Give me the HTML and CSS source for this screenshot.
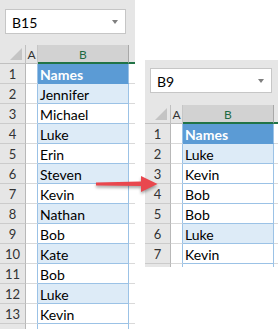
FILE: index.html
```html
<!DOCTYPE html>
<html lang="en">
<head>
    <meta charset="UTF-8">
    <title>Remove duplicates</title>
    <link rel="stylesheet" href="styles.css">
</head>
<body>
    <div class="canvas">
        <section class="sheet sheet-left">
            <div class="namebox"><span>B15</span><i class="caret"></i></div>
            <div class="grid">
                <div class="corner"></div><div class="colhead">A</div><div class="colhead sel">B</div><div class="colhead rest"></div>
                <div class="rh">1</div><div class="ca"></div><div class="cb head">Names</div><div class="cr"></div>
                <div class="rh">2</div><div class="ca"></div><div class="cb band">Jennifer</div><div class="cr"></div>
                <div class="rh">3</div><div class="ca"></div><div class="cb">Michael</div><div class="cr"></div>
                <div class="rh">4</div><div class="ca"></div><div class="cb band">Luke</div><div class="cr"></div>
                <div class="rh">5</div><div class="ca"></div><div class="cb">Erin</div><div class="cr"></div>
                <div class="rh">6</div><div class="ca"></div><div class="cb band">Steven</div><div class="cr"></div>
                <div class="rh">7</div><div class="ca"></div><div class="cb">Kevin</div><div class="cr"></div>
                <div class="rh">8</div><div class="ca"></div><div class="cb band">Nathan</div><div class="cr"></div>
                <div class="rh">9</div><div class="ca"></div><div class="cb">Bob</div><div class="cr"></div>
                <div class="rh">10</div><div class="ca"></div><div class="cb band">Kate</div><div class="cr"></div>
                <div class="rh">11</div><div class="ca"></div><div class="cb">Bob</div><div class="cr"></div>
                <div class="rh">12</div><div class="ca"></div><div class="cb band">Luke</div><div class="cr"></div>
                <div class="rh">13</div><div class="ca"></div><div class="cb">Kevin</div><div class="cr"></div>
                <div class="rh"></div><div class="ca"></div><div class="cb"></div><div class="cr"></div>
            </div>
        </section>

        <section class="sheet sheet-right">
            <div class="namebox"><span>B9</span><i class="caret"></i></div>
            <div class="grid">
                <div class="corner"></div><div class="colhead">A</div><div class="colhead sel">B</div><div class="colhead rest"></div>
                <div class="rh">1</div><div class="ca"></div><div class="cb head">Names</div><div class="cr"></div>
                <div class="rh">2</div><div class="ca"></div><div class="cb band">Luke</div><div class="cr"></div>
                <div class="rh">3</div><div class="ca"></div><div class="cb">Kevin</div><div class="cr"></div>
                <div class="rh">4</div><div class="ca"></div><div class="cb">Bob</div><div class="cr"></div>
                <div class="rh">5</div><div class="ca"></div><div class="cb">Bob</div><div class="cr"></div>
                <div class="rh">6</div><div class="ca"></div><div class="cb band">Luke</div><div class="cr"></div>
                <div class="rh">7</div><div class="ca"></div><div class="cb">Kevin</div><div class="cr"></div>
                <div class="rh"></div><div class="ca"></div><div class="cb"></div><div class="cr"></div>
            </div>
        </section>

        <!-- arrow from the original list to the de-duplicated one -->
        <svg class="arrow" width="80" height="30" viewBox="90 170 80 30">
            <path d="M96 182.5 L141 181.5 L141 176 L157.5 184 L141 192 L141 186 L96 185.5 Z" fill="#e9474e"/>
        </svg>
    </div>
</body>
</html>
```

FILE: styles.css
```css
body {
    margin: 0;
    background: #fff;
    font-family: Lato, "Liberation Sans", sans-serif;
    color: #000;
}
.canvas {
    position: relative;
    display: flex;
    align-items: flex-start;
    gap: 10px;
    width: 278px;
    height: 329px;
    overflow: hidden;
}
.sheet {
    background: #e6e6e6;
    padding-top: 9px;
    overflow: hidden;
    flex-shrink: 0;
}
.sheet-left {
    width: 135px;
    height: 320px;
}
.sheet-right {
    width: 133px;
    height: 199px;
    margin-top: 60px;
    padding-top: 8px;
}
.namebox {
    box-sizing: border-box;
    display: flex;
    align-items: center;
    justify-content: space-between;
    width: 121px;
    height: 25px;
    margin-left: 5px;
    padding: 2px 7px 0 6px;
    background: #fff;
    border: 1px solid #c6c6c6;
    font-size: 14px;
}
.sheet-right .namebox {
    width: 122px;
}
.caret {
    width: 0;
    height: 0;
    margin-top: -2px;
    border-left: 3.5px solid transparent;
    border-right: 3.5px solid transparent;
    border-top: 4px solid #7f7f7f;
}
.grid {
    display: grid;
    grid-template-columns: 26px 12px 91px 6px;
    grid-template-rows: 19px;
    grid-auto-rows: 20px;
    margin-top: 11px;
}
.sheet-right .grid {
    grid-template-columns: 26px 12px 91px 4px;
    margin-top: 12px;
}
.grid > div {
    box-sizing: border-box;
}
.corner {
    position: relative;
    border-right: 1px solid #c0c0c0;
    border-bottom: 1px solid #c0c0c0;
}
.corner::after {
    content: "";
    position: absolute;
    right: 3px;
    bottom: 3px;
    width: 12px;
    height: 12px;
    background: #c4c4c4;
    clip-path: polygon(100% 0, 100% 100%, 0 100%);
}
.colhead {
    display: flex;
    align-items: center;
    justify-content: center;
    font-size: 12px;
    color: #333;
    border-bottom: 1px solid #c0c0c0;
    border-right: 1px solid #c6c6c6;
    padding-top: 1px;
}
.colhead.sel {
    background: #d2d2d2;
    color: #1f6b42;
    border-right: 1px solid #a8a8a8;
    border-bottom: 2px solid #217346;
}
.colhead.rest {
    border-right: none;
    border-bottom: 2px solid #217346;
}
.rh {
    display: flex;
    align-items: center;
    justify-content: center;
    font-size: 13px;
    color: #333;
    padding-top: 1px;
    border-right: 1px solid #b8b8b8;
    border-bottom: 1px solid #cbcbcb;
}
.ca {
    background: #fff;
    border-right: 1px solid #9bc2e6;
    border-bottom: 1px solid #d9d9d9;
}
.cb {
    display: flex;
    align-items: center;
    padding: 1px 0 0 2px;
    font-size: 14px;
    background: #fff;
    border-right: 1px solid #9bc2e6;
    border-bottom: 1px solid #9bc2e6;
}
.cb.band {
    background: #ddebf7;
}
.cb.head {
    background: #5b9bd5;
    border-bottom-color: #5b9bd5;
    color: #fff;
    font-weight: bold;
}
.cr {
    background: #fff;
    border-bottom: 1px solid #d9d9d9;
}
.arrow {
    position: absolute;
    left: 90px;
    top: 170px;
    filter: drop-shadow(0 2px 1.5px rgba(0, 0, 0, 0.35));
}
```
